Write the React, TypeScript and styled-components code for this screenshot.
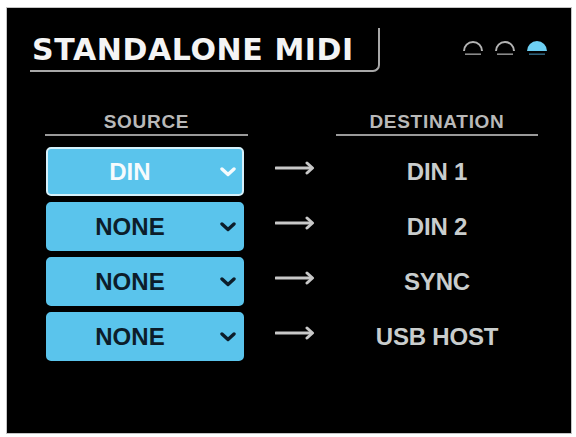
import React from "react";
import styled, { createGlobalStyle } from "styled-components";

const GlobalStyle = createGlobalStyle`
  html, body {
    margin: 0;
    padding: 0;
    background: #ffffff;
  }
  * {
    box-sizing: border-box;
  }
`;

const Frame = styled.div`
  width: 576px;
  height: 437px;
  padding: 8px 0 0 7px;
  background: #ffffff;
`;

const Screen = styled.div`
  width: 564px;
  height: 425px;
  background: #000000;
  box-shadow: 0 0 0 1px #c4c4c4;
  display: flex;
  flex-direction: column;
  padding: 20px 23px 0 23px;
  font-family: "Liberation Sans", Arial, sans-serif;
`;

const Header = styled.div`
  display: flex;
  justify-content: space-between;
  align-items: flex-start;
`;

const TitleBox = styled.div`
  width: 350px;
  height: 44px;
  border-right: 2px solid #a8a8a8;
  border-bottom: 2px solid #a8a8a8;
  border-bottom-right-radius: 7px;
  padding: 7px 0 0 2px;
`;

const Title = styled.h1`
  margin: 0;
  font-family: "DejaVu Sans", Verdana, sans-serif;
  font-weight: 700;
  font-size: 30px;
  line-height: 30px;
  letter-spacing: 0.6px;
  color: #f4f4f4;
  white-space: nowrap;
`;

const Lights = styled.div`
  display: flex;
  gap: 10px;
  margin-top: 10px;
`;

const Body = styled.div`
  display: grid;
  grid-template-columns: 203px 88px 202px;
  grid-auto-rows: auto;
  row-gap: 6px;
  margin: 39px 0 0 15px;
`;

const ColumnHead = styled.div`
  font-size: 19px;
  line-height: 22px;
  font-weight: 700;
  letter-spacing: 0.7px;
  color: #b9b9b9;
  text-align: center;
  padding-bottom: 1px;
  border-bottom: 2px solid #9a9a9a;
  margin-bottom: 5px;
`;

const Spacer = styled.div``;

const Select = styled.div<{ $active?: boolean }>`
  width: 198px;
  height: 49px;
  margin-left: 1px;
  border-radius: 5px;
  background: #5ac4ec;
  border: 2px solid ${(p) => (p.$active ? "#d6f1fb" : "#5ac4ec")};
  display: flex;
  align-items: center;
  padding-right: 6px;
  color: ${(p) => (p.$active ? "#f6fbfd" : "#0c1d2a")};
`;

const SelectLabel = styled.span`
  flex: 1;
  text-align: center;
  padding-right: 8px;
  font-size: 24px;
  font-weight: 700;
  letter-spacing: 0.1px;
`;

const Chevron = styled.svg`
  width: 16px;
  height: 10px;
  display: block;
`;

const ArrowCell = styled.div`
  display: flex;
  align-items: center;
  justify-content: center;
  padding-bottom: 8px;
  padding-left: 6px;
`;

const Destination = styled.div`
  display: flex;
  align-items: center;
  justify-content: center;
  font-size: 24px;
  font-weight: 700;
  letter-spacing: -0.2px;
  color: #c9cdcd;
`;

function Dome({ lit }: { lit?: boolean }) {
  return (
    <svg width="22" height="18" viewBox="0 0 22 18">
      {lit ? (
        <path d="M1 13 A10 10 0 0 1 21 13 Z" fill="#6dd0f4" />
      ) : (
        <path d="M2 13 A9 9 0 0 1 20 13" fill="none" stroke="#b4b4b4" strokeWidth="2" />
      )}
      <line x1="3" y1="16.2" x2="19" y2="16.2" stroke={lit ? "#2e5f78" : "#8a8a8a"} strokeWidth="1.6" />
    </svg>
  );
}

function Arrow() {
  return (
    <svg width="40" height="14" viewBox="0 0 40 14">
      <line x1="1" y1="7" x2="36" y2="7" stroke="#c8c8c8" strokeWidth="3" strokeLinecap="round" />
      <polyline points="32,2 37.5,7 32,12" fill="none" stroke="#c8c8c8" strokeWidth="3" strokeLinecap="round" strokeLinejoin="round" />
    </svg>
  );
}

const routes = [
  { source: "DIN", dest: "DIN 1", active: true },
  { source: "NONE", dest: "DIN 2" },
  { source: "NONE", dest: "SYNC" },
  { source: "NONE", dest: "USB HOST" },
];

export default function App() {
  return (
    <>
      <GlobalStyle />
      <Frame>
        <Screen>
          <Header>
            <TitleBox>
              <Title>STANDALONE MIDI</Title>
            </TitleBox>
            <Lights>
              <Dome />
              <Dome />
              <Dome lit />
            </Lights>
          </Header>
          <Body>
            <ColumnHead>SOURCE</ColumnHead>
            <Spacer />
            <ColumnHead>DESTINATION</ColumnHead>
            {routes.map((r, i) => (
              <React.Fragment key={r.dest + i}>
                <Select $active={r.active}>
                  <SelectLabel>{r.source}</SelectLabel>
                  <Chevron viewBox="0 0 16 10">
                    <polyline
                      points="2,2 8,7.5 14,2"
                      fill="none"
                      stroke="currentColor"
                      strokeWidth="3.4"
                      strokeLinecap="round"
                      strokeLinejoin="round"
                    />
                  </Chevron>
                </Select>
                <ArrowCell>
                  <Arrow />
                </ArrowCell>
                <Destination>{r.dest}</Destination>
              </React.Fragment>
            ))}
          </Body>
        </Screen>
      </Frame>
    </>
  );
}
